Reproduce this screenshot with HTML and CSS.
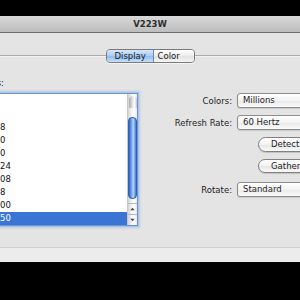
FILE: index.html
```html
<!DOCTYPE html>
<html>
<head>
<meta charset="utf-8">
<link rel="stylesheet" href="styles.css">
</head>
<body>
<div class="screen">
  <div class="top-black"></div>
  <div class="window">
    <div class="titlebar">V223W</div>
    <div class="content">
      <div class="tabrow">
        <div class="segmented">
          <div class="seg seg-on">Display</div>
          <div class="seg seg-off">Color</div>
        </div>
      </div>
      <div class="panel">
        <div class="leftcol">
          <div class="res-label"><span>Resolutions:</span></div>
          <div class="list">
            <div class="rows">
              <div class="row"></div>
              <div class="row"></div>
              <div class="row">8</div>
              <div class="row">0</div>
              <div class="row">0</div>
              <div class="row">24</div>
              <div class="row">08</div>
              <div class="row">8</div>
              <div class="row">00</div>
              <div class="row row-sel">50</div>
            </div>
            <div class="scrollbar">
              <div class="track">
                <div class="cap"></div>
                <div class="thumb"></div>
              </div>
              <div class="arrow arrow-up"><svg width="10" height="10" viewBox="0 0 10 10"><path d="M2.5 6.5 L5 3.5 L7.5 6.5 Z" fill="#4a4a4a"/></svg></div>
              <div class="arrow arrow-down"><svg width="10" height="10" viewBox="0 0 10 10"><path d="M2.5 3.5 L5 6.5 L7.5 3.5 Z" fill="#4a4a4a"/></svg></div>
            </div>
          </div>
        </div>
        <div class="rightcol">
          <div class="frow">
            <div class="lbl">Colors:</div>
            <div class="popup">Millions</div>
          </div>
          <div class="frow">
            <div class="lbl">Refresh Rate:</div>
            <div class="popup">60 Hertz</div>
          </div>
          <div class="frow">
            <div class="lbl"></div>
            <div class="btn">Detect</div>
          </div>
          <div class="frow frow-gather">
            <div class="lbl"></div>
            <div class="btn btn-short">Gather</div>
          </div>
          <div class="frow frow-rotate">
            <div class="lbl">Rotate:</div>
            <div class="popup">Standard</div>
          </div>
        </div>
      </div>
    </div>
    <div class="bottom-strip"></div>
  </div>
</div>
</body>
</html>
```
FILE: styles.css
```css
html, body {
  margin: 0;
  padding: 0;
  background: #000;
}
body {
  width: 300px;
  height: 300px;
  overflow: hidden;
  font-family: "DejaVu Sans", "Liberation Sans", sans-serif;
  font-size: 8.5px;
  color: #1e1e1e;
}
.screen {
  width: 300px;
  height: 300px;
  overflow: hidden;
  background: #000;
}
.top-black {
  height: 16px;
}
.window {
  background: #e4e4e4;
}
.titlebar {
  height: 16px;
  line-height: 17px;
  text-align: center;
  font-weight: bold;
  color: #2e2e2e;
  background: linear-gradient(#d8d8d8, #bdbdbd);
  border-bottom: 1px solid #6e6e6e;
}
.content {
  height: 214px;
  background: #e4e4e4;
}
.tabrow {
  display: flex;
  align-items: center;
  padding-top: 16px;
}
.tabrow::before,
.tabrow::after {
  content: "";
  flex: 1;
  height: 1px;
  background: #ababab;
  border-bottom: 1px solid #f2f2f2;
}
.segmented {
  display: flex;
  height: 14px;
  box-sizing: border-box;
  border: 1px solid #7a7a7a;
  border-radius: 4px;
  overflow: hidden;
  box-shadow: 0 1px 0 rgba(255,255,255,0.6);
}
.seg {
  line-height: 12px;
  box-sizing: border-box;
  color: #1a1a1a;
}
.seg-on {
  width: 47px;
  padding-left: 8px;
  background: linear-gradient(#d7e7fa, #a9cbf2 50%, #8dbaf0 51%, #c5e0fb);
  border-right: 1px solid #6d86ad;
}
.seg-off {
  width: 40px;
  padding-left: 4px;
  background: linear-gradient(#ffffff, #ececec 50%, #e2e2e2 51%, #f4f4f4);
}
.panel {
  display: flex;
}
.leftcol {
  width: 138px;
  flex: none;
}
.res-label {
  margin-top: 14px;
  height: 12px;
  line-height: 12px;
  width: 4px;
  display: flex;
  justify-content: flex-end;
  white-space: nowrap;
  color: #2a2a2a;
}
.list {
  margin-top: 4px;
  margin-left: -3px;
  width: 141px;
  height: 133px;
  box-sizing: border-box;
  border: 1px solid #6f95d0;
  box-shadow: 0 0 0 1px #a7c2ea, 0 0 2px 2px rgba(130,170,230,0.45);
  background: #fff;
  display: flex;
}
.rows {
  flex: 1;
  padding-top: 1px;
}
.row {
  height: 13px;
  line-height: 13px;
  padding-left: 2px;
  color: #111;
}
.row-sel {
  background: #3a75d6;
  color: #fff;
}
.scrollbar {
  width: 10px;
  flex: none;
  display: flex;
  flex-direction: column;
  background: linear-gradient(90deg, #d4d4d4, #f4f4f4 40%, #ffffff 70%, #e6e6e6);
  border-left: 1px solid #c8c8c8;
  box-sizing: border-box;
}
.track {
  flex: 1;
  display: flex;
  flex-direction: column;
  align-items: center;
}
.cap {
  margin-top: 2px;
  width: 8px;
  height: 12px;
  border-radius: 4px 4px 1px 1px;
  background: linear-gradient(90deg, #a8a8a8, #e6e6e6 45%, #ffffff 70%, #bdbdbd);
}
.thumb {
  margin-top: 9px;
  width: 9px;
  height: 82px;
  border-radius: 4px;
  background: linear-gradient(90deg, #2d63c4, #6ea3ec 35%, #b7d6fa 60%, #3e7ad8);
  border: 1px solid #2f5fae;
  box-sizing: border-box;
}
.arrow {
  height: 10px;
  border-top: 1px solid #b8b8b8;
  display: flex;
  justify-content: center;
  align-items: center;
}
.arrow svg {
  display: block;
}
.rightcol {
  flex: 1;
  padding-top: 30px;
}
.frow {
  display: flex;
  align-items: center;
  height: 15px;
  margin-bottom: 7px;
  white-space: nowrap;
}
.frow-gather {
  margin-top: 3px;
  height: 14px;
  margin-bottom: 9px;
}
.lbl {
  width: 94px;
  flex: none;
  text-align: right;
  color: #1e1e1e;
}
.popup {
  margin-left: 5px;
  width: 90px;
  height: 15px;
  line-height: 13px;
  box-sizing: border-box;
  flex: none;
  padding-left: 5px;
  border: 1px solid #8c8c8c;
  border-radius: 3px;
  background: linear-gradient(#ffffff, #f3f3f3 50%, #e8e8e8 51%, #fbfbfb);
  box-shadow: 0 1px 1px rgba(0,0,0,0.12);
}
.btn {
  margin-left: 26px;
  width: 80px;
  height: 15px;
  line-height: 13px;
  box-sizing: border-box;
  flex: none;
  padding-left: 12px;
  border: 1px solid #808080;
  border-radius: 8px;
  background: linear-gradient(#ffffff, #f2f2f2 50%, #e4e4e4 51%, #fafafa);
  box-shadow: 0 1px 1px rgba(0,0,0,0.15);
}
.btn-short {
  height: 14px;
  line-height: 12px;
}
.bottom-strip {
  height: 15px;
  background: #ececec;
  border-top: 1px solid #cfcfcf;
  box-sizing: border-box;
}
```
